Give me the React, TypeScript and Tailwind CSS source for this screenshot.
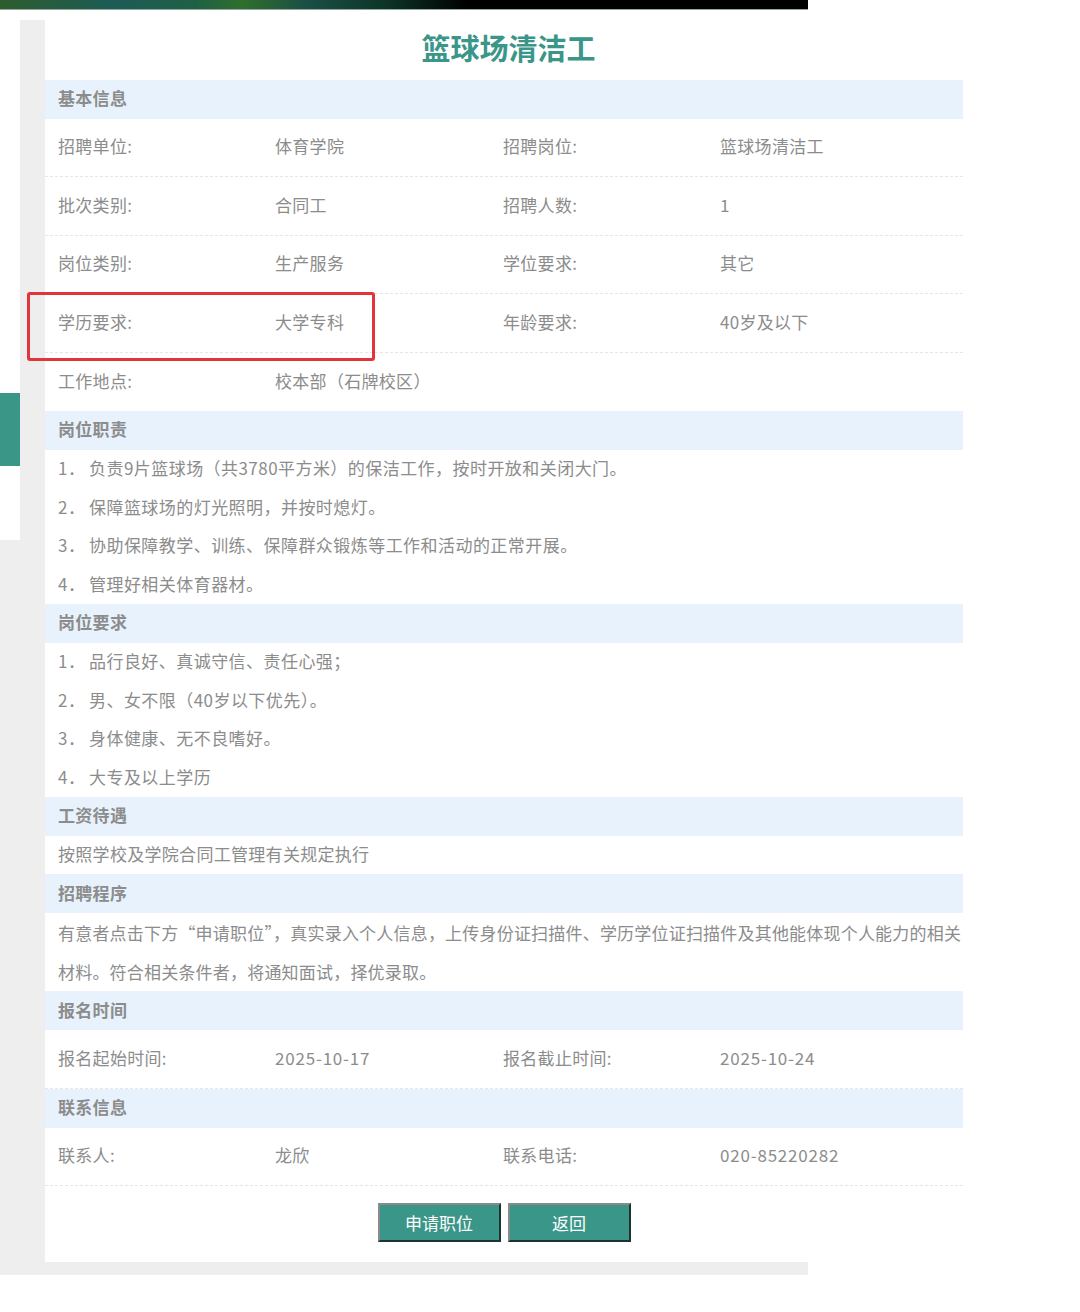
import React from "react";

const font = { fontFamily: '"Noto Sans CJK SC", "Noto Sans", sans-serif' };

function Header({ title }: { title: string }) {
  return (
    <div className="h-[39px] bg-[#e8f2fc] pl-[13px] pb-[3px] flex items-center text-[17px] font-bold text-[#8c8c8c] tracking-[0.3px]">
      {title}
    </div>
  );
}

function V({ t }: { t?: string }) {
  if (!t) return <div />;
  const numeric = /^[0-9-]+$/.test(t);
  return <div className={numeric ? "tracking-[0.8px]" : "tracking-[0.3px]"}>{t}</div>;
}

function InfoRow({ a, b, c, d, last }: { a: string; b: string; c?: string; d?: string; last?: boolean }) {
  return (
    <div
      className={
        "h-[58.4px] pb-[3px] grid grid-cols-[230px_228px_217px_1fr] items-center text-[17px] text-[#8c8c8c] whitespace-nowrap " +
        (last ? "" : "border-b border-dashed border-[#e6e6e6]")
      }
    >
      <div className="pl-[13px] tracking-[0.3px]">{a}</div>
      <V t={b} />
      <div className="tracking-[0.3px]">{c}</div>
      <V t={d} />
    </div>
  );
}

function Item({ n, text }: { n: string; text: string }) {
  return (
    <div className="h-[38.5px] pl-[13px] pb-[2px] flex items-center text-[17px] text-[#8c8c8c] whitespace-nowrap tracking-[0.45px]">
      <span className="w-[31px] shrink-0">{n}．</span>
      <span>{text}</span>
    </div>
  );
}

function Line({ text }: { text: string }) {
  return (
    <div className="h-[38.5px] pl-[13px] pb-[2px] flex items-center text-[17px] text-[#8c8c8c] whitespace-nowrap tracking-[0.3px]">
      {text}
    </div>
  );
}

const btn =
  "w-[123px] h-[39px] bg-[#3a9688] text-white text-[17px] border-2 border-t-[#8a8a8a] border-l-[#8a8a8a] border-b-[#1d3531] border-r-[#1d3531]";

export default function App() {
  return (
    <div className="relative w-[1080px] h-[1312px] bg-white overflow-hidden" style={font}>
      <div className="h-[10px] w-[808px] border-b border-[#8fa9a0] bg-[linear-gradient(90deg,#2d5d2c_0%,#1d5b56_14%,#1f6046_24%,#2f6f2c_30%,#1a4f45_38%,#0d3326_48%,#000_58%,#000_100%)]" />
      <div className="h-[10px]" />
      <div className="flex">
        <div className="w-[20px] flex flex-col">
          <div className="h-[520px] bg-white flex flex-col">
            <div className="h-[373px]" />
            <div className="h-[73px] bg-[#3a9686]" />
          </div>
          <div className="flex-1 bg-[#eeeeee]" />
        </div>
        <div className="w-[25px] bg-[#eeeeee]" />
        <div className="w-[918px] bg-white">
          <div className="h-[60px] pl-[9px] pb-[4px] flex items-center justify-center text-[29px] font-bold text-[#3a9688]">
            篮球场清洁工
          </div>
          <Header title="基本信息" />
          <InfoRow a="招聘单位:" b="体育学院" c="招聘岗位:" d="篮球场清洁工" />
          <InfoRow a="批次类别:" b="合同工" c="招聘人数:" d="1" />
          <InfoRow a="岗位类别:" b="生产服务" c="学位要求:" d="其它" />
          <InfoRow a="学历要求:" b="大学专科" c="年龄要求:" d="40岁及以下" />
          <InfoRow a="工作地点:" b="校本部（石牌校区）" last />
          <Header title="岗位职责" />
          <Item n="1" text="负责9片篮球场（共3780平方米）的保洁工作，按时开放和关闭大门。" />
          <Item n="2" text="保障篮球场的灯光照明，并按时熄灯。" />
          <Item n="3" text="协助保障教学、训练、保障群众锻炼等工作和活动的正常开展。" />
          <Item n="4" text="管理好相关体育器材。" />
          <Header title="岗位要求" />
          <Item n="1" text="品行良好、真诚守信、责任心强；" />
          <Item n="2" text="男、女不限（40岁以下优先）。" />
          <Item n="3" text="身体健康、无不良嗜好。" />
          <Item n="4" text="大专及以上学历" />
          <Header title="工资待遇" />
          <Line text="按照学校及学院合同工管理有关规定执行" />
          <Header title="招聘程序" />
          <div className="pl-[13px] text-[17px] leading-[39px] text-[#8c8c8c] tracking-[0.2px]">
            有意者点击下方“申请职位”，真实录入个人信息，上传身份证扫描件、学历学位证扫描件及其他能体现个人能力的相关材料。符合相关条件者，将通知面试，择优录取。
          </div>
          <Header title="报名时间" />
          <InfoRow a="报名起始时间:" b="2025-10-17" c="报名截止时间:" d="2025-10-24" />
          <Header title="联系信息" />
          <InfoRow a="联系人:" b="龙欣" c="联系电话:" d="020-85220282" />
          <div className="h-[76px] flex justify-center gap-[7px] pt-[17px]">
            <button className={btn}>申请职位</button>
            <button className={btn}>返回</button>
          </div>
        </div>
      </div>
      <div className="h-[13px] w-[808px] bg-[#eeeeee]" />
      <div className="absolute left-[27px] top-[292px] w-[348px] h-[69px] border-[3px] border-[#e3343a] rounded-[3px]" />
    </div>
  );
}
